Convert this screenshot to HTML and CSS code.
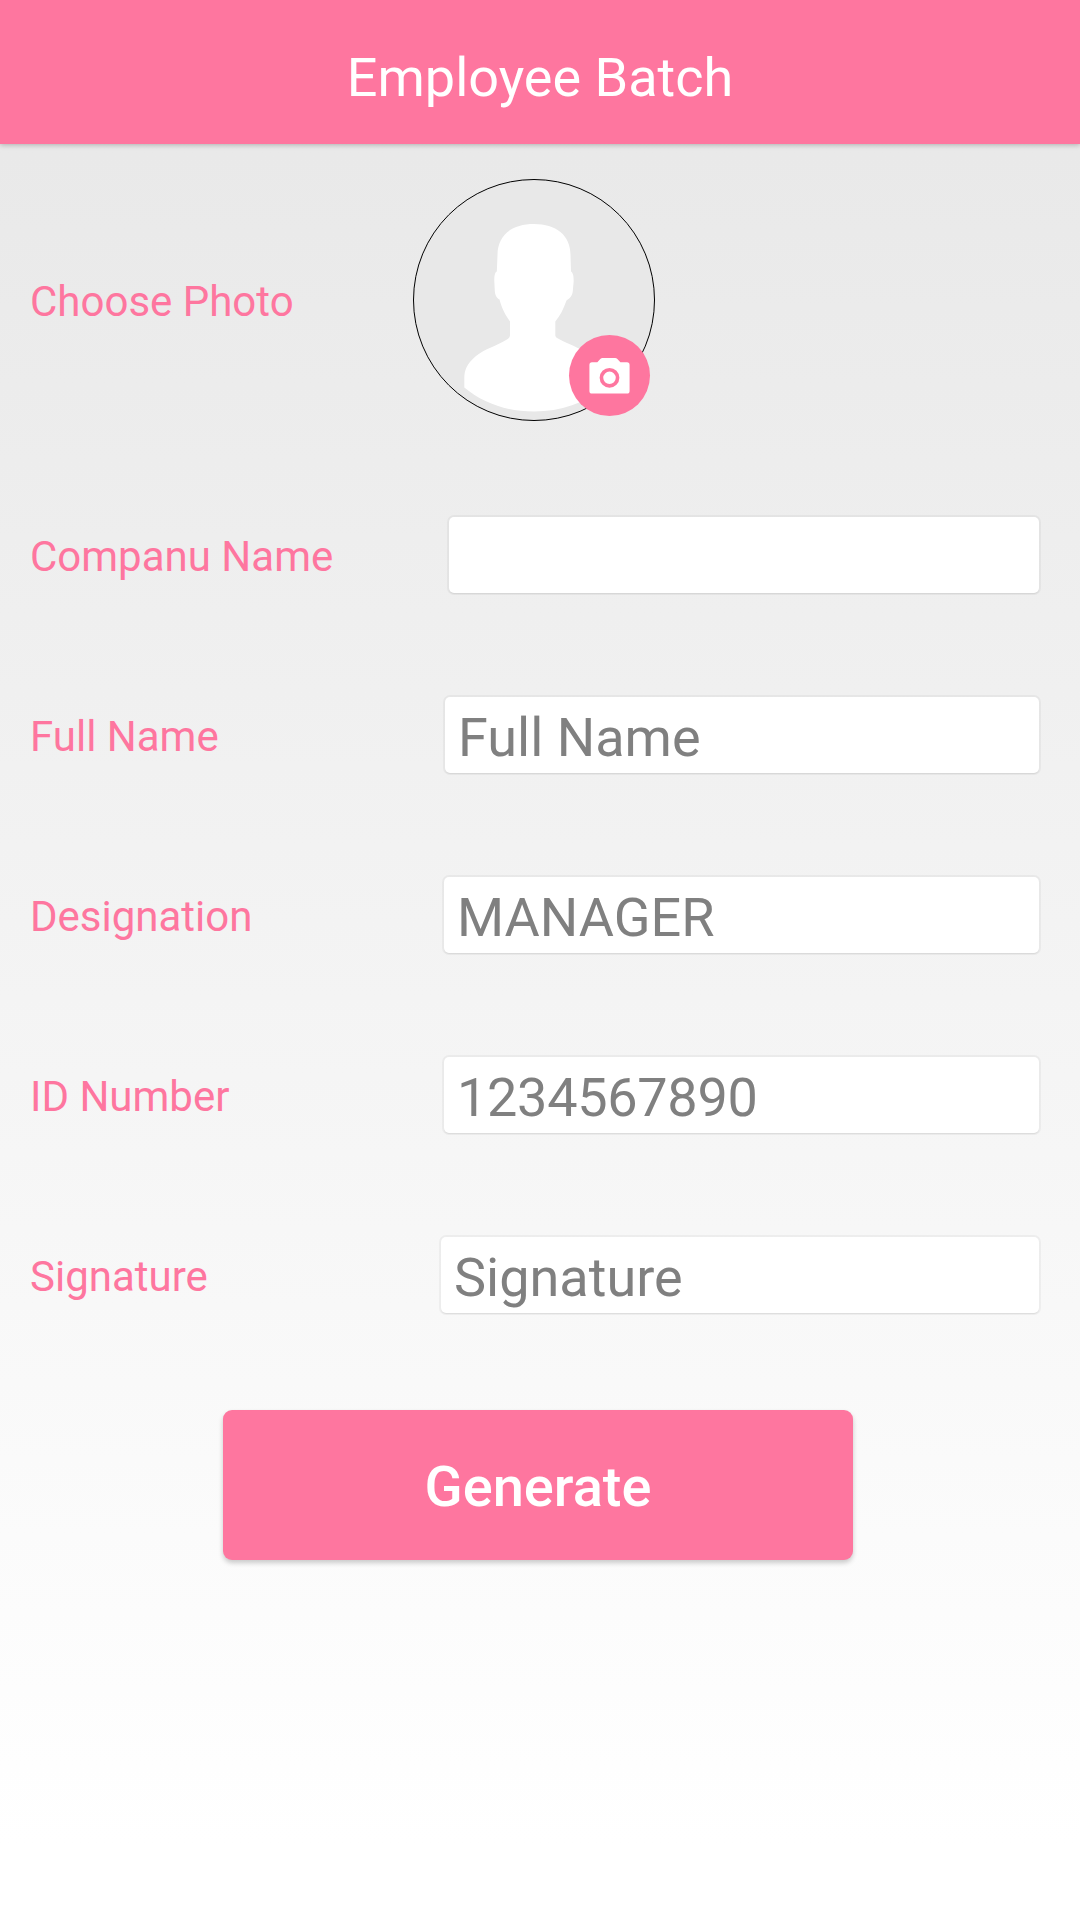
FILE: index.html
```html
<!DOCTYPE html>
<html lang="en">
<head>
    <meta charset="UTF-8">
    <meta name="viewport" content="width=device-width, initial-scale=1.0">
    <title>Employee Batch</title>
    <link rel="stylesheet" href="styles.css">
</head>
<body>
    <header class="header">
        <h1>Employee Batch</h1>
    </header>

    <form class="form">
        <div class="photo-row">
            <span class="label">Choose Photo</span>
            <div class="photo">
                <svg class="avatar" viewBox="0 0 240 240">
                    <path fill="#fff" d="M120 44 C98 44 83.5 55 83.5 75 L82.8 91.5 C80.5 92.5 80.3 97 80.3 101 L80.8 111 C81.2 116 83 118 85.5 119.5 C88 129 92 136 96 141.5 V155 C96 157 95 158.2 92.5 159.8 C82 166 70 169.5 62 176 C52.5 184 50.3 190 50.3 199 V207.5 C69 223 93 231.5 120 231.5 C147 231.5 171 223 189.7 207.5 V199 C189.7 190 187.5 184 178 176 C170 169.5 158 166 144 158.5 C141.8 157.3 141.3 156.5 141.3 155 V141.5 C146 136 149.5 129 152.5 120.5 C156 118 158.3 116 158.8 111 L159.7 101 C159.7 96 159 92.5 157 91.5 L156.5 75 C156.5 55 142 44 120 44 Z"/>
                </svg>
                <button type="button" class="camera" aria-label="Choose photo">
                    <svg viewBox="0 0 246 246">
                        <path fill="#fff" d="M70 83 H86 L95 73 Q98 70 102 70 H140 Q144 70 147 73 L156 83 H176 Q184 83 184 91 V170 Q184 178 176 178 H70 Q62 178 62 170 V91 Q62 83 70 83 Z"/>
                        <circle cx="123" cy="130" r="24.5" fill="#fff" stroke="#fe769f" stroke-width="11"/>
                    </svg>
                </button>
            </div>
        </div>

        <div class="field">
            <label class="label company" for="company">Companu Name</label>
            <input type="text" id="company">
        </div>
        <div class="field">
            <label class="label fullname" for="fullname">Full Name</label>
            <input type="text" id="fullname" placeholder="Full Name">
        </div>
        <div class="field">
            <label class="label" for="designation">Designation</label>
            <input type="text" id="designation" placeholder="MANAGER">
        </div>
        <div class="field">
            <label class="label" for="idnumber">ID Number</label>
            <input type="text" id="idnumber" class="number" placeholder="1234567890">
        </div>
        <div class="field">
            <label class="label signature" for="signature">Signature</label>
            <input type="text" id="signature" placeholder="Signature">
        </div>

        <button type="button" class="generate">Generate</button>
    </form>
</body>
</html>
```
FILE: styles.css
```css
* {
    box-sizing: border-box;
}
body {
    margin: 0;
    min-height: 100vh;
    font-family: Roboto, sans-serif;
    background: linear-gradient(#e7e7e7, #fff 96%);
}
.header {
    display: flex;
    align-items: center;
    justify-content: center;
    height: 144px;
    padding-top: 11px;
    background: #fe769f;
    box-shadow: 0 1px 5px rgba(0,0,0,0.25);
}
.header h1 {
    margin: 0;
    font-size: 54px;
    font-weight: 400;
    color: white;
}
.form {
    display: flex;
    flex-direction: column;
    padding: 0 41px 0 30px;
}
.label {
    flex: none;
    width: 414px;
    padding-top: 2px;
    font-size: 42px;
    color: #fe769f;
}
.label.company {
    width: 419px;
}
.label.fullname {
    width: 415px;
}
.label.signature {
    width: 411px;
}
.photo-row {
    display: flex;
    align-items: center;
    height: 321px;
    padding-bottom: 9px;
}
.photo-row .label {
    width: 383px;
}
.photo {
    position: relative;
    width: 242px;
    height: 242px;
    border: 1px solid #000;
    border-radius: 50%;
    background: #e8e8e8;
}
.avatar {
    display: block;
    width: 100%;
    height: 100%;
}
.camera {
    position: absolute;
    right: 4px;
    bottom: 4px;
    width: 81px;
    height: 81px;
    padding: 0;
    border: none;
    border-radius: 50%;
    background: #fe769f;
}
.camera svg {
    display: block;
    width: 100%;
    height: 100%;
}
.field {
    display: flex;
    align-items: center;
    height: 180px;
}
.field input {
    flex: 1;
    min-width: 0;
    height: 76px;
    padding: 5px 12px 0 13px;
    border: none;
    border-radius: 5px;
    background: white;
    box-shadow: 0 0 0 2px rgba(0,0,0,0.04), 0 1px 1px rgba(0,0,0,0.07);
    font-family: inherit;
    font-size: 54px;
    color: #333;
}
.field input.number {
    letter-spacing: -0.3px;
}
.field input::placeholder {
    color: #808080;
    opacity: 1;
}
.generate {
    width: 630px;
    height: 150px;
    margin: 45px 0 0 193px;
    padding: 4px 0 0;
    border: none;
    border-radius: 9px;
    background: #fe769f;
    box-shadow: 0 3px 5px rgba(0,0,0,0.2);
    font-family: inherit;
    font-size: 56px;
    font-weight: 500;
    color: white;
}
```
